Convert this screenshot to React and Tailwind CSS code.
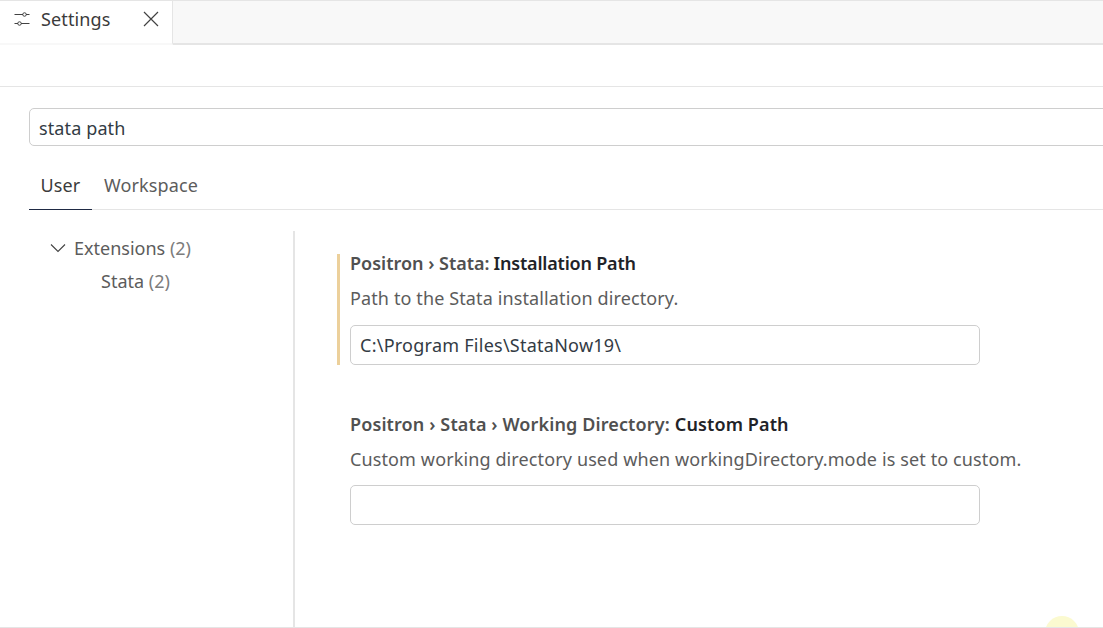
import React from "react";

const font = { fontFamily: '"Noto Sans", "Open Sans", sans-serif' };

function SettingsIcon() {
  return (
    <svg width="16" height="16" viewBox="0 0 16 16" fill="none" stroke="#424242" strokeWidth="1" className="shrink-0 -ml-px -mt-[3px]">
      <path d="M0.5 3.5H9M12 3.5H15.5M0.5 12.5H4M7 12.5H15.5" />
      <circle cx="10.5" cy="3.5" r="1.75" />
      <circle cx="5.5" cy="12.5" r="1.75" />
    </svg>
  );
}

function Setting({ crumbs, name, desc, value, modified }) {
  return (
    <div className={`flex flex-col border-l-[3px] pl-[10px] ${modified ? "border-[#ecd09b]" : "border-transparent"}`}>
      <div className={`h-[20px] flex items-center text-[18px] font-semibold text-[#505050] leading-[20px] whitespace-nowrap ${modified ? "-mt-px" : ""}`}>
        <span className={modified ? "tracking-[0px]" : ""}>{crumbs}</span>
        <span className={`text-[#1f2328] ${modified ? "ml-[4px] tracking-[-0.2px]" : "ml-[5px]"}`}>{name}</span>
      </div>
      <div className="mt-[15px] h-[20px] flex items-center text-[18px] text-[#5c5c5c] leading-[20px] whitespace-nowrap">{desc}</div>
      <div className={`w-[630px] h-[40px] rounded-[5px] border border-[#cecece] bg-white flex items-center pl-[9px] text-[18px] text-[#333b44] whitespace-nowrap tracking-[0.25px] ${modified ? "mt-[17px]" : "mt-[16px]"}`}>
        {value}
      </div>
    </div>
  );
}

export default function App() {
  return (
    <div style={font} className="relative w-[1103px] h-[628px] overflow-hidden bg-white flex flex-col tracking-[0.12px]">
      <div className="h-[45px] flex border-t border-b-2 border-t-[#e5e5e5] border-b-[#e5e5e5] bg-[#f8f8f8] shrink-0 -mb-[2px]">
        <div className="w-[173px] h-[44px] bg-white border-r border-b-2 border-r-[#e5e5e5] border-b-[#f8f8f8] flex items-center pl-[15px] pb-[4px]">
          <SettingsIcon />
          <span className="ml-[11px] text-[18px] text-[#3b3b3b] -mt-[1px]">Settings</span>
          <svg width="18" height="18" viewBox="0 0 18 18" fill="none" stroke="#424242" strokeWidth="1.2" className="ml-[32px] -mt-[3px]">
            <path d="M2 2L16 16M16 2L2 16" />
          </svg>
        </div>
      </div>
      <div className="h-[44px] border-b border-[#e5e5e5] shrink-0" />
      <div className="flex-1 flex flex-col border-b border-[#e5e5e5] min-h-0">
        <div className="mt-[21px] ml-[29px] w-[1100px] h-[38px] rounded-[5px] border border-[#cecece] flex items-center pl-[9px] pt-[2px] text-[18px] text-[#333b44] shrink-0">
          stata path
        </div>
        <div className="mt-[20px] ml-[29px] h-[44px] border-b border-[#e5e5e5] flex text-[18px] shrink-0">
          <div className="w-[63px] h-[44px] border-b border-[#1f2a44] flex items-center justify-center pb-[5px] text-[#3b3b3b]">User</div>
          <div className="ml-[12px] h-[44px] flex items-center pb-[5px] text-[#5c5c5c]">Workspace</div>
        </div>
        <div className="mt-[21px] flex flex-1 min-h-0">
          <div className="w-[293px] shrink-0 text-[18px] text-[#5c5c5c] pt-[6px] tracking-[0px]">
            <div className="h-[22px] flex items-center pl-[50px]">
              <svg width="16" height="16" viewBox="0 0 16 16" fill="none" stroke="#424242" strokeWidth="1.1">
                <path d="M1 4.5L8 11.5L15 4.5" />
              </svg>
              <span className="ml-[8px]">Extensions <span className="text-[#7c7c7c]">(2)</span></span>
            </div>
            <div className="mt-[11px] h-[22px] flex items-center pl-[101px]">
              <span>Stata <span className="text-[#7c7c7c]">(2)</span></span>
            </div>
          </div>
          <div className="flex-1 border-l-2 border-[#e5e5e5] pl-[42px] pt-[23px] flex flex-col gap-[49px]">
            <Setting modified crumbs="Positron › Stata:" name="Installation Path" desc="Path to the Stata installation directory." value="C:\Program Files\StataNow19\" />
            <Setting crumbs="Positron › Stata › Working Directory:" name="Custom Path" desc="Custom working directory used when workingDirectory.mode is set to custom." value="" />
          </div>
        </div>
      </div>
      <div className="absolute left-[1045px] top-[616px] w-[34px] h-[34px] rounded-full bg-[#fbfad0]" />
      <div className="absolute left-0 top-[627px] w-full h-px bg-[#e5e5e5]" />
    </div>
  );
}
